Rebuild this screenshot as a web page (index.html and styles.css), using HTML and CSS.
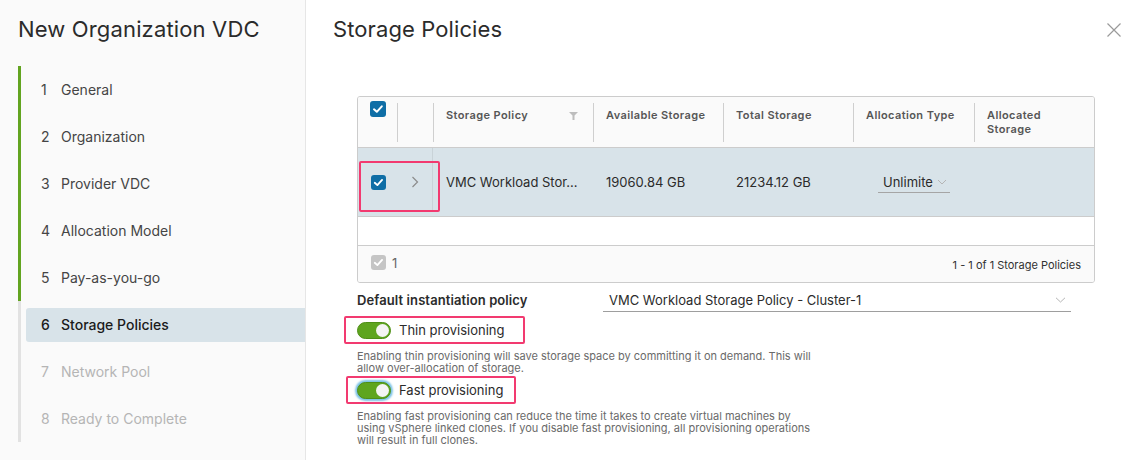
FILE: index.html
```html
<!DOCTYPE html>
<html lang="en">
<head>
<meta charset="utf-8">
<title>New Organization VDC</title>
<link rel="stylesheet" href="styles.css">
</head>
<body>
<div class="app">
  <aside class="sidebar">
    <h1 class="side-title">New Organization VDC</h1>
    <ol class="steps">
      <li class="step done"><span class="step-inner"><span class="num">1</span>General</span></li>
      <li class="step done"><span class="step-inner"><span class="num">2</span>Organization</span></li>
      <li class="step done"><span class="step-inner"><span class="num">3</span>Provider VDC</span></li>
      <li class="step done"><span class="step-inner"><span class="num">4</span>Allocation Model</span></li>
      <li class="step done"><span class="step-inner"><span class="num">5</span>Pay-as-you-go</span></li>
      <li class="step current"><span class="step-inner"><span class="num">6</span>Storage Policies</span></li>
      <li class="step todo"><span class="step-inner"><span class="num">7</span>Network Pool</span></li>
      <li class="step todo"><span class="step-inner"><span class="num">8</span>Ready to Complete</span></li>
    </ol>
  </aside>
  <main class="main">
    <header class="main-head">
      <h2 class="main-title">Storage Policies</h2>
      <button class="close" aria-label="Close">
        <svg width="16" height="16" viewBox="0 0 16 16"><path d="M1.5 1.5 L14.5 14.5 M14.5 1.5 L1.5 14.5" stroke="#9a9a9a" stroke-width="1.2" fill="none"/></svg>
      </button>
    </header>
    <section class="content">
      <div class="grid">
        <div class="grid-head">
          <div class="hcell hsel"><span class="cb cb-blue"><svg viewBox="0 0 16 16"><path d="M4 8.3 L6.8 10.8 L11.8 5.3" stroke="#fff" stroke-width="2" fill="none" stroke-linecap="round" stroke-linejoin="round"/></svg></span></div>
          <div class="hcell"><div class="hin"></div></div>
          <div class="hcell"><div class="hin hin-filter"><span>Storage Policy</span><svg class="filter" width="9" height="8" viewBox="0 0 9 8"><path d="M0 0 H9 L5.5 3.5 V8 H3.5 V3.5 Z" fill="#bdbdbd"/></svg></div></div>
          <div class="hcell"><div class="hin">Available Storage</div></div>
          <div class="hcell"><div class="hin">Total Storage</div></div>
          <div class="hcell"><div class="hin">Allocation Type</div></div>
          <div class="hcell"><div class="hin">Allocated<br>Storage</div></div>
        </div>
        <div class="grid-row">
          <div class="cell csel"><span class="cb cb-blue cb-sm"><svg viewBox="0 0 16 16"><path d="M4 8.3 L6.8 10.8 L11.8 5.3" stroke="#fff" stroke-width="2" fill="none" stroke-linecap="round" stroke-linejoin="round"/></svg></span></div>
          <div class="cell cexp"><svg width="8" height="12" viewBox="0 0 8 12"><path d="M1.5 1 L6.5 6 L1.5 11" stroke="#8c8c8c" stroke-width="1.2" fill="none"/></svg></div>
          <div class="cell ctext">VMC Workload Stor...</div>
          <div class="cell ctext">19060.84 GB</div>
          <div class="cell ctext">21234.12 GB</div>
          <div class="cell cselect"><span class="mini-select"><span class="ms-text">Unlimite</span><svg width="10" height="6" viewBox="0 0 10 6"><path d="M1 1 L5 5 L9 1" stroke="#b5b5b5" stroke-width="1" fill="none"/></svg></span></div>
          <div class="cell"></div>
          <div class="annot"></div>
        </div>
        <div class="grid-empty"></div>
        <div class="grid-foot">
          <span class="foot-left"><span class="cb cb-gray cb-sm"><svg viewBox="0 0 16 16"><path d="M4 8.3 L6.8 10.8 L11.8 5.3" stroke="#fff" stroke-width="2" fill="none" stroke-linecap="round" stroke-linejoin="round"/></svg></span><span class="foot-count">1</span></span>
          <span class="foot-right">1 - 1 of 1 Storage Policies</span>
        </div>
      </div>

      <div class="policy-row">
        <label class="policy-label">Default instantiation policy</label>
        <div class="select">
          <span>VMC Workload Storage Policy - Cluster-1</span>
          <svg width="11" height="6" viewBox="0 0 11 6"><path d="M1 0.8 L5.5 5 L10 0.8" stroke="#b5b5b5" stroke-width="1" fill="none"/></svg>
        </div>
      </div>

      <div class="hl hl-thin">
        <span class="toggle"><span class="knob"></span></span>
        <span class="toggle-label">Thin provisioning</span>
      </div>
      <p class="help">Enabling thin provisioning will save storage space by committing it on demand. This will<br>allow over-allocation of storage.</p>

      <div class="hl hl-fast">
        <span class="toggle focus"><span class="knob"></span></span>
        <span class="toggle-label">Fast provisioning</span>
      </div>
      <p class="help">Enabling fast provisioning can reduce the time it takes to create virtual machines by<br>using vSphere linked clones. If you disable fast provisioning, all provisioning operations<br>will result in full clones.</p>
    </section>
  </main>
</div>
</body>
</html>
```

FILE: styles.css
```css
* { box-sizing: border-box; }
html, body { margin: 0; padding: 0; }
body {
  font-family: "Inter", "Noto Sans", sans-serif;
  color: #313131;
  background: #fff;
  width: 1138px;
  height: 460px;
  overflow: hidden;
}
.app {
  display: flex;
  height: 460px;
}

/* Sidebar */
.sidebar {
  width: 306px;
  flex: none;
  background: #fafafa;
  border-right: 1px solid #e6e6e6;
  padding-top: 15px;
}
.side-title {
  margin: 0 0 23px 18px;
  font-size: 22px;
  line-height: 28px;
  font-weight: 400;
  color: #2b2b2b;
  letter-spacing: 0.15px;
}
.steps {
  list-style: none;
  margin: 0 0 0 18px;
  padding: 0;
}
.step {
  height: 47px;
  display: flex;
  align-items: center;
  border-left: 3px solid #e2e2e2;
}
.step.done { border-left-color: #62a420; }
.step-inner {
  display: flex;
  align-items: center;
  height: 34px;
  flex: 1;
  margin-left: 5px;
  padding-left: 15px;
  font-size: 14px;
  color: #454545;
  border-radius: 3px 0 0 3px;
}
.num { width: 20px; flex: none; }
.step.current .step-inner {
  background: #d8e3e9;
  color: #1b1b1b;
  font-weight: 500;
}
.step.todo .step-inner { color: #b5b5b5; }

/* Main */
.main {
  flex: 1;
  padding: 15px 16px 0 27px;
}
.main-head {
  display: flex;
  justify-content: space-between;
  align-items: flex-start;
}
.main-title {
  margin: 0;
  font-size: 22px;
  line-height: 28px;
  font-weight: 400;
  color: #2b2b2b;
  letter-spacing: 0.1px;
}
.close {
  border: 0;
  background: none;
  padding: 0;
  margin-top: 7px;
  width: 16px;
  height: 16px;
  display: flex;
}
.content {
  margin: 53px 0 0 24px;
  width: 738px;
}

/* Datagrid */
.grid {
  border: 1px solid #cccccc;
  border-radius: 3px;
  overflow: hidden;
}
.grid-head, .grid-row {
  display: grid;
  grid-template-columns: 39px 36px 160px 130px 130px 121px 120px;
}
.grid-head {
  height: 51px;
  background: #fafafa;
  border-bottom: 1px solid #cccccc;
}
.hcell {
  padding: 6px 0 5px;
  font-size: 11px;
  font-weight: 600;
  color: #565656;
  line-height: 14px;
  letter-spacing: 0.4px;
}
.hsel {
  display: flex;
  justify-content: center;
  padding-top: 4px;
  padding-left: 1px;
}
.hin {
  height: 100%;
  border-left: 1px solid #cfcfcf;
  padding: 5px 12px 0;
}
.hin-filter {
  display: flex;
  justify-content: space-between;
  padding-right: 15px;
}
.filter { margin-top: 4px; }

.cb {
  display: inline-flex;
  width: 16px;
  height: 16px;
  border-radius: 3px;
  flex: none;
}
.cb svg { width: 100%; height: 100%; }
.cb-sm { width: 15px; height: 15px; }
.cb-blue { background: #0f6ea6; }
.cb-gray { background: #c5c5c5; }

.grid-row {
  position: relative;
  height: 69px;
  background: #d8e3e9;
  border-bottom: 1px solid #cccccc;
  align-items: center;
}
.cell {
  font-size: 13px;
  color: #2b2b2b;
}
.csel {
  display: flex;
  justify-content: center;
  padding-left: 1px;
}
.cexp {
  align-self: stretch;
  display: flex;
  align-items: center;
  justify-content: center;
  border-right: 1px solid #c9d3d8;
  margin-bottom: 5px;
  padding-top: 5px;
}
.ctext { padding-left: 13px; white-space: nowrap; }
.cselect { padding-left: 25px; }
.mini-select {
  display: inline-flex;
  align-items: center;
  width: 72px;
  height: 21px;
  padding-left: 5px;
  gap: 2px;
  border-bottom: 1px solid #a5a5a5;
  overflow: hidden;
}
.ms-text { width: 52px; overflow: hidden; white-space: nowrap; }
.annot {
  position: absolute;
  left: 1px;
  top: 13px;
  width: 81px;
  height: 51px;
  border: 2px solid #f23a70;
  border-radius: 2px;
}
.grid-empty {
  height: 29px;
  background: #fff;
  border-bottom: 1px solid #cccccc;
}
.grid-foot {
  height: 36px;
  background: #fafafa;
  display: flex;
  align-items: center;
  justify-content: space-between;
  padding: 0 13px 0 13px;
}
.foot-left {
  display: flex;
  align-items: center;
  margin-top: -3px;
}
.foot-count {
  margin-left: 6px;
  font-size: 13px;
  color: #666;
}
.foot-right {
  font-size: 11px;
  color: #313131;
  margin-top: 2px;
}

/* Policy row */
.policy-row {
  display: flex;
  align-items: flex-end;
  margin-top: 6px;
  width: 714px;
}
.policy-label {
  width: 246px;
  flex: none;
  font-size: 13px;
  font-weight: 600;
  color: #2b2b2b;
  line-height: 20px;
  padding-bottom: 2px;
  letter-spacing: 0.1px;
}
.select {
  flex: 1;
  display: flex;
  justify-content: space-between;
  align-items: center;
  height: 23px;
  padding: 0 5px 1px 6px;
  border-bottom: 1px solid #9e9e9e;
  font-size: 13px;
  color: #2b2b2b;
}

/* Toggles */
.hl {
  display: flex;
  align-items: center;
  height: 28px;
  border: 2px solid #f23a70;
  border-radius: 2px;
}
.hl-thin {
  margin: 4px 0 0 -13px;
  width: 181px;
  padding-left: 11px;
}
.hl-fast {
  margin: 2px 0 0 -11px;
  width: 170px;
  padding-left: 9px;
}
.toggle {
  position: relative;
  width: 34px;
  height: 17px;
  border-radius: 9px;
  background: #5ea51f;
  border: 1px solid #4f8f17;
  flex: none;
}
.toggle.focus {
  box-shadow: 0 0 2px 2px #7cc3e6;
}
.knob {
  position: absolute;
  right: 1px;
  top: 1px;
  width: 13px;
  height: 13px;
  border-radius: 50%;
  background: #f4f4f4;
}
.toggle-label {
  margin-left: 8px;
  font-size: 13px;
  color: #2b2b2b;
}
.help {
  margin: 6px 0 0;
  font-size: 11px;
  line-height: 12px;
  color: #6a6a6a;
}
```
